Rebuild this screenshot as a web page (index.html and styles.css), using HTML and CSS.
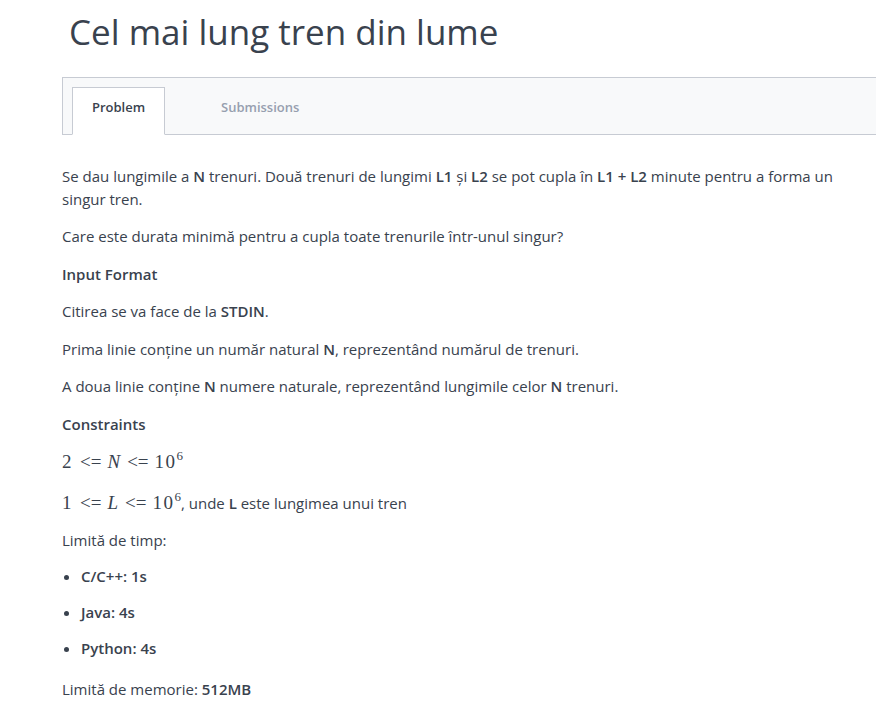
FILE: index.html
```html
<!DOCTYPE html>
<html lang="ro">
<head>
<meta charset="utf-8">
<title>Cel mai lung tren din lume</title>
<link rel="stylesheet" href="styles.css">
</head>
<body>
<div class="page">
  <h1 class="title">Cel mai lung tren din lume</h1>
  <div class="tabs">
    <div class="tab active">Problem</div>
    <div class="tab">Submissions</div>
  </div>
  <div class="content">
    <p>Se dau lungimile a <b>N</b> trenuri. Două trenuri de lungimi <b>L1</b> și <b>L2</b> se pot cupla în <b>L1 + L2</b> minute pentru a forma un singur tren.</p>
    <p>Care este durata minimă pentru a cupla toate trenurile într-unul singur?</p>
    <p><b>Input Format</b></p>
    <p>Citirea se va face de la <b>STDIN</b>.</p>
    <p>Prima linie conține un număr natural <b>N</b>, reprezentând numărul de trenuri.</p>
    <p>A doua linie conține <b>N</b> numere naturale, reprezentând lungimile celor <b>N</b> trenuri.</p>
    <p><b>Constraints</b></p>
    <p class="mline"><span class="math"><span class="num">2</span><span class="rel">&lt;=</span><i>N</i><span class="rel">&lt;=</span><span class="num">10</span><sup>6</sup></span></p>
    <p class="mline last"><span class="math"><span class="num">1</span><span class="rel">&lt;=</span><i>L</i><span class="rel">&lt;=</span><span class="num">10</span><sup>6</sup></span>, unde <b>L</b> este lungimea unui tren</p>
    <p>Limită de timp:</p>
    <ul class="limits">
      <li><b>C/C++: 1s</b></li>
      <li><b>Java: 4s</b></li>
      <li><b>Python: 4s</b></li>
    </ul>
    <p>Limită de memorie: <b>512MB</b></p>
  </div>
</div>
</body>
</html>
```
FILE: styles.css
```css
html, body {
  margin: 0;
  padding: 0;
  background: #ffffff;
}
body {
  font-family: "Open Sans", "Liberation Sans", sans-serif;
  color: #39424e;
}
.page {
  padding-left: 62px;
}
.title {
  font-size: 35px;
  font-weight: 400;
  line-height: 48px;
  margin: 8px 0 21px 7px;
  color: #39424e;
}
.tabs {
  display: flex;
  height: 58px;
  box-sizing: border-box;
  border: 1px solid #c7cbd3;
  border-right: none;
  background: #f8f9fa;
  padding-left: 9px;
  align-items: flex-end;
}
.tab {
  height: 47px;
  box-sizing: border-box;
  display: flex;
  align-items: flex-start;
  justify-content: center;
  padding: 10px 20px 0 20px;
  font-size: 13px;
  line-height: 18px;
  font-weight: 600;
  color: #979faf;
  margin-bottom: -1px;
}
.tab.active {
  width: 93px;
  padding: 10px 0 0 0;
  background: #ffffff;
  border: 1px solid #c7cbd3;
  border-bottom: 1px solid #ffffff;
  color: #39424e;
  margin-right: 36px;
  height: 48px;
}
.content {
  width: 790px;
  padding-top: 30px;
  font-size: 15px;
  line-height: 22.5px;
}
.content p {
  margin: 0 0 15px 0;
}
.content b {
  font-weight: 600;
}
.content p.mline {
  line-height: 24px;
  margin-bottom: 15px;
}
.content p.mline.last {
  margin-bottom: 12px;
}
.math {
  font-family: "Liberation Serif", "Times New Roman", serif;
  font-size: 19px;
  color: #39424e;
}
.math i {
  font-style: italic;
}
.math .num {
  letter-spacing: 1.5px;
}
.math .rel {
  margin: 0 6px 0 7px;
}
.math sup {
  font-size: 13px;
  vertical-align: 0;
  position: relative;
  top: -8px;
}
.limits {
  margin: -1.5px 0 18px 0;
  padding-left: 19px;
}
.limits li {
  line-height: 22.5px;
  margin-bottom: 13.5px;
}
```
